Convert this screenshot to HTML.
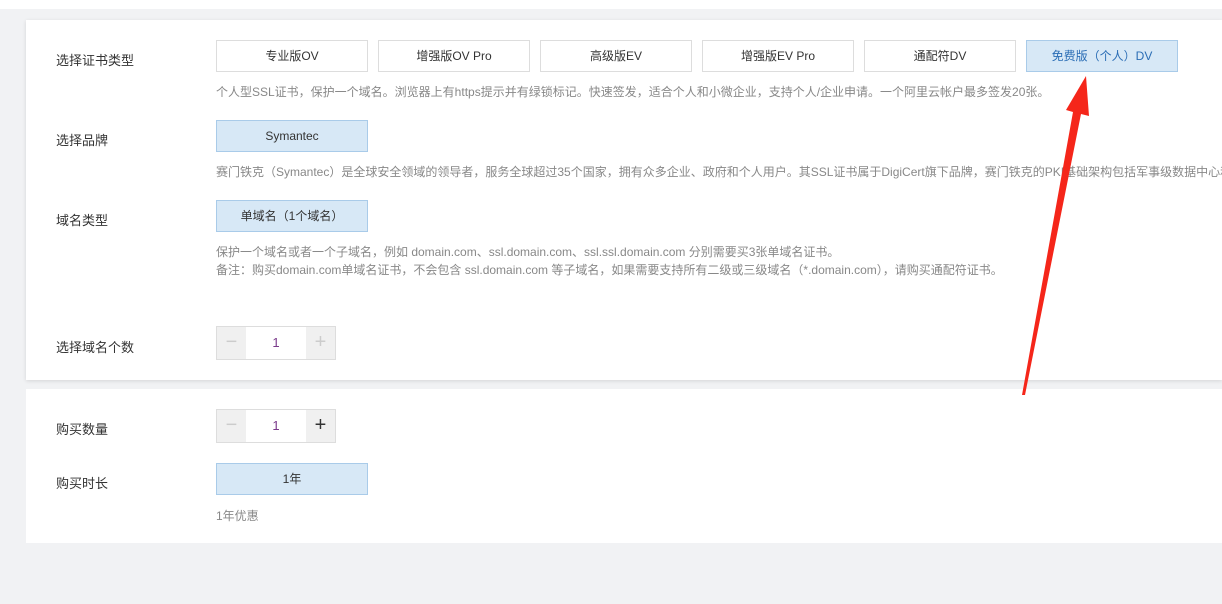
<!DOCTYPE html>
<html><head><meta charset="utf-8"><style>
*{margin:0;padding:0;box-sizing:border-box}
html,body{width:1222px;height:604px;background:#f1f2f4}
body{font-family:"Liberation Sans","Noto Sans CJK SC",sans-serif;position:relative;overflow:hidden;color:#333}
.top{position:absolute;left:0;top:0;width:1222px;height:9px;background:#fff}
.card{position:absolute;left:26px;width:1196px;background:#fff}
.c1{top:20px;height:360px;box-shadow:0 1px 4px rgba(0,0,0,.12)}
.c2{top:389px;height:154px}
.lbl{position:absolute;left:56px;font-size:13px;color:#333}
.btn{position:absolute;width:152px;height:32px;border:1px solid #ddd;background:#fff;font-size:12px;text-align:center;line-height:30px;color:#333}
.sel{background:#d7e8f6;border-color:#a9cbe9}
.desc{position:absolute;left:216px;font-size:12px;color:#888;white-space:nowrap}
.num{position:absolute;left:216px;width:120px;height:34px;border:1px solid #ddd;display:flex}
.num span{width:29px;background:#f0f0f0;text-align:center;line-height:31px;font-size:20px;font-weight:300;color:#ccc}
.num b{flex:1;text-align:center;line-height:32px;font-weight:normal;font-size:13px;color:#7a3a8a}
</style></head><body>
<div class="top"></div>
<div class="card c1"></div>
<div class="card c2"></div>
<div class="lbl" style="top:50px">选择证书类型</div>
<div class="btn" style="left:216px;top:40px">专业版OV</div>
<div class="btn" style="left:378px;top:40px">增强版OV Pro</div>
<div class="btn" style="left:540px;top:40px">高级版EV</div>
<div class="btn" style="left:702px;top:40px">增强版EV Pro</div>
<div class="btn" style="left:864px;top:40px">通配符DV</div>
<div class="btn sel" style="left:1026px;top:40px;color:#2a6db5">免费版（个人）DV</div>
<div class="desc" style="top:83px">个人型SSL证书，保护一个域名。浏览器上有https提示并有绿锁标记。快速签发，适合个人和小微企业，支持个人/企业申请。一个阿里云帐户最多签发20张。</div>
<div class="lbl" style="top:130px">选择品牌</div>
<div class="btn sel" style="left:216px;top:120px">Symantec</div>
<div class="desc" style="top:163px">赛门铁克（Symantec）是全球安全领域的领导者，服务全球超过35个国家，拥有众多企业、政府和个人用户。其SSL证书属于DigiCert旗下品牌，赛门铁克的PKI基础架构包括军事级数据中心和</div>
<div class="lbl" style="top:210px">域名类型</div>
<div class="btn sel" style="left:216px;top:200px">单域名（1个域名）</div>
<div class="desc" style="top:243px">保护一个域名或者一个子域名，例如 domain.com、ssl.domain.com、ssl.ssl.domain.com 分别需要买3张单域名证书。</div>
<div class="desc" style="top:261px">备注：购买domain.com单域名证书，不会包含 ssl.domain.com 等子域名，如果需要支持所有二级或三级域名（*.domain.com），请购买通配符证书。</div>
<div class="lbl" style="top:337px">选择域名个数</div>
<div class="num" style="top:326px"><span>−</span><b>1</b><span>+</span></div>
<div class="lbl" style="top:419px">购买数量</div>
<div class="num" style="top:409px"><span>−</span><b>1</b><span style="color:#333">+</span></div>
<div class="lbl" style="top:473px">购买时长</div>
<div class="btn sel" style="left:216px;top:463px;height:32px">1年</div>
<div class="desc" style="top:507px">1年优惠</div>
<svg style="position:absolute;left:0;top:0" width="1222" height="604"><polygon points="1022,395 1073,112 1066,110 1086,76 1089,116 1081,114 1025,395" fill="#f5261a"/></svg>
</body></html>
